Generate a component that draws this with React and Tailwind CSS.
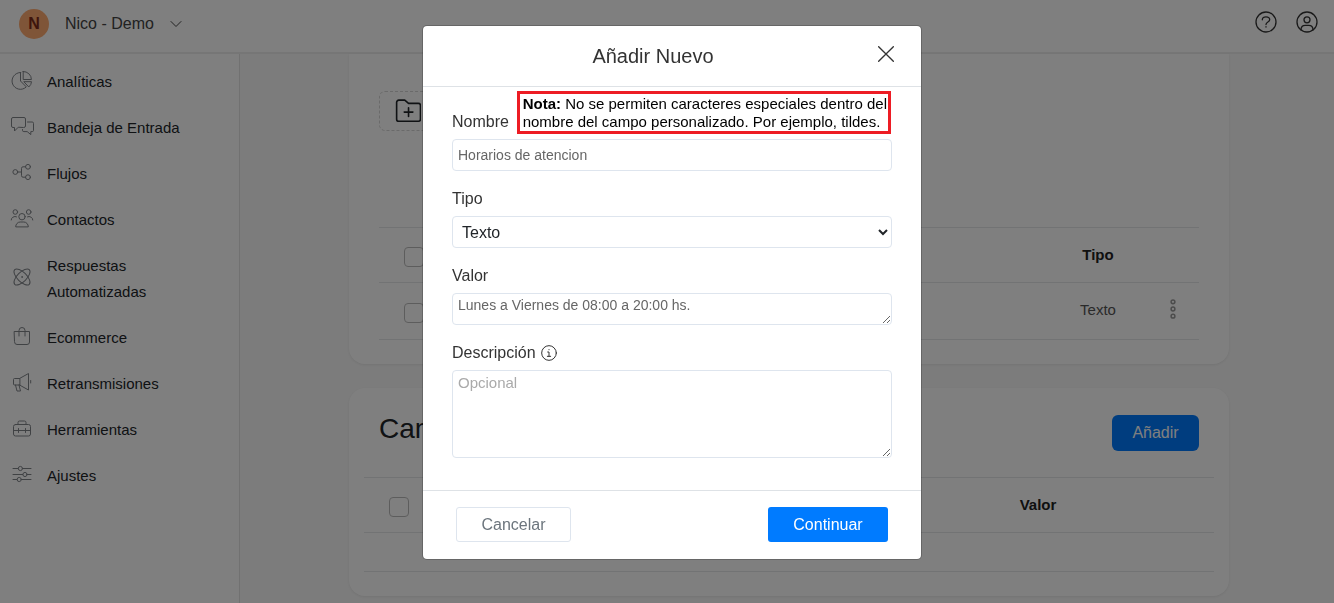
import { useState } from 'react';

const ICONS = {
  analytics: (
    <>
      <path d="M10.5 4.5V13l5.8 5.9A8.4 8.4 0 1 1 10.5 4.5Z" />
      <path d="M13.2 3.5v8h8.2a8 8 0 0 0-8.2-8Z" />
      <path d="M14.2 13.7h7.3a7 7 0 0 1-2.4 5Z" />
    </>
  ),
  inbox: (
    <>
      <path d="M8 13.5 4.5 17v-3.5H3A1.5 1.5 0 0 1 1.5 12V5A1.5 1.5 0 0 1 3 3.5h11A1.5 1.5 0 0 1 15.5 5v7a1.5 1.5 0 0 1-1.5 1.5Z" />
      <path d="M17.5 8h4.7a1.3 1.3 0 0 1 1.3 1.3v7a1.3 1.3 0 0 1-1.3 1.3h-1.4v3l-3.6-3h-3.4a1.3 1.3 0 0 1-1.3-1.3v-.8" />
    </>
  ),
  flows: (
    <>
      <circle cx="5.3" cy="12" r="2.4" />
      <circle cx="18" cy="6.8" r="2.4" />
      <circle cx="18" cy="17.2" r="2.4" />
      <path d="M7.7 12h3.8M15.6 6.8H13q-1.5 0-1.5 1.5v7.4q0 1.5 1.5 1.5h2.6" />
    </>
  ),
  contacts: (
    <>
      <circle cx="12" cy="10.7" r="3.2" />
      <circle cx="5.3" cy="6" r="2.3" />
      <circle cx="18.7" cy="6" r="2.3" />
      <path d="M5.7 20.5a4.5 4.5 0 0 1 4.5-4.5h3.6a4.5 4.5 0 0 1 4.5 4.5Z" />
      <path d="M1.2 14a3.6 3.6 0 0 1 5.3-3.2M22.8 14a3.6 3.6 0 0 0-5.3-3.2" />
    </>
  ),
  automation: (
    <>
      <ellipse cx="12" cy="12" rx="10.3" ry="4.7" transform="rotate(45 12 12)" />
      <ellipse cx="12" cy="12" rx="10.3" ry="4.7" transform="rotate(-45 12 12)" />
      <circle cx="12" cy="12" r="0.4" />
    </>
  ),
  shop: (
    <>
      <path d="M4.5 7.5h15V18a2.5 2.5 0 0 1-2.5 2.5H7A2.5 2.5 0 0 1 4.5 18Z" />
      <path d="M9 12V6.5a3 3 0 0 1 6 0V12" />
    </>
  ),
  broadcast: (
    <>
      <path d="M9.5 8.5h-5a1 1 0 0 0-1 1V14a1 1 0 0 0 1 1h5Z" />
      <path d="m9.5 8.5 9-5V20l-9-5M5.500 15 7 21h3.500L9 15M20.700 10.500V13" />
    </>
  ),
  tools: (
    <>
      <rect x="3.5" y="8.5" width="17" height="11.5" rx="2" />
      <path d="M8 8.5v-2A1.5 1.5 0 0 1 9.500 5h5A1.5 1.5 0 0 1 16 6.500v2M3.500 14.500h17M8.500 12.500v4M15.500 12.500v4" />
    </>
  ),
  settings: (
    <>
      <path d="M3 6.5h5.200M12.600 6.500H21M3 12.500h9.800M17.200 12.500H21M3 17.500h4M11.400 17.500H21" />
      <circle cx="10.4" cy="6.5" r="2.1" />
      <circle cx="15" cy="12.5" r="2.1" />
      <circle cx="9.2" cy="17.5" r="2.1" />
    </>
  ),
};

const MENU = [
  { icon: 'analytics', label: 'Analíticas' },
  { icon: 'inbox', label: 'Bandeja de Entrada' },
  { icon: 'flows', label: 'Flujos' },
  { icon: 'contacts', label: 'Contactos' },
  { icon: 'automation', label: 'Respuestas Automatizadas' },
  { icon: 'shop', label: 'Ecommerce' },
  { icon: 'broadcast', label: 'Retransmisiones' },
  { icon: 'tools', label: 'Herramientas' },
  { icon: 'settings', label: 'Ajustes' },
];

function Icon({ children, className, strokeWidth = 1 }) {
  return (
    <svg
      viewBox="0 0 24 24"
      fill="none"
      stroke="currentColor"
      strokeWidth={strokeWidth}
      strokeLinecap="round"
      strokeLinejoin="round"
      aria-hidden="true"
      className={className}
    >
      {children}
    </svg>
  );
}

function TopBar() {
  return (
    <header className="flex h-[54px] items-center justify-between border-b-2 border-[#ececec] bg-white pb-1 pl-[19px] pr-[15px]">
      <button type="button" className="flex items-center text-base text-[#444]">
        <span className="flex size-[30px] items-center justify-center rounded-full bg-[#ffaa70] font-bold text-[#7d2a18]">N</span>
        <span className="ml-4">Nico - Demo</span>
        <Icon className="ml-4 size-3 text-[#444]" strokeWidth={2}>
          <path d="m2 7 10 10L22 7" />
        </Icon>
      </button>
      <div className="flex items-center gap-[17px] pb-1 text-[#333]">
        <button type="button" aria-label="Ayuda">
          <Icon className="size-6" strokeWidth={1.3}>
            <circle cx="12" cy="12" r="10" />
            <path d="M8.3 9.800c0-1.900 1.600-3 3.700-3s3.700 1.100 3.700 3c0 2.400-3.700 2.100-3.700 4.700M12 16.700v.4" />
          </Icon>
        </button>
        <button type="button" aria-label="Mi cuenta">
          <Icon className="size-6" strokeWidth={1.3}>
            <circle cx="12" cy="12" r="10" />
            <circle cx="12" cy="9.8" r="3" />
            <path d="M6 20c0-3 1.800-4.700 4.200-4.700h3.600c2.400 0 4.200 1.700 4.200 4.700" />
          </Icon>
        </button>
      </div>
    </header>
  );
}

function Sidebar() {
  return (
    <nav className="w-60 shrink-0 border-r border-[#e2e2e2] bg-white pt-[5px]">
      <ul>
        {MENU.map((item) => (
          <li key={item.label}>
            <a href="#" className="flex items-center gap-[13px] py-[10px] pl-[10px] pr-8 text-[15px] leading-[26px] text-[#212529]">
              <Icon className="-mt-1 size-6 shrink-0 text-[#808489]">{ICONS[item.icon]}</Icon>
              <span>{item.label}</span>
            </a>
          </li>
        ))}
      </ul>
    </nav>
  );
}

function Check({ label }) {
  return (
    <input
      type="checkbox"
      aria-label={label}
      className="ml-[25px] mt-1 block size-5 appearance-none rounded border border-[#bbb] bg-white"
    />
  );
}

function FieldsCard() {
  return (
    <section className="rounded-b-2xl bg-white px-[30px] pb-6 pt-[37px] shadow-[0_1px_3px_rgba(0,0,0,0.08)]">
      <button type="button" aria-label="Nueva carpeta" className="flex h-10 w-56 items-center rounded-md border border-dashed border-[#d4d4d4] pl-[15px]">
        <Icon className="size-[26px] text-[#212529]" strokeWidth={1.5}>
          <path d="M1.5 4a2 2 0 0 1 2-2H9l3.500 3h9a2 2 0 0 1 2 2v12.500a2 2 0 0 1-2 2h-18a2 2 0 0 1-2-2ZM12.500 9v8M8.500 13h8" />
        </Icon>
      </button>
      <table className="mt-24 w-full table-fixed border-collapse text-[15px]">
        <thead>
          <tr className="h-[55px] border-y border-[#e4e6e8]">
            <th className="w-20"><Check label="Seleccionar todo" /></th>
            <th />
            <th className="w-[98px] font-bold text-[#212121]">Tipo</th>
            <th className="w-[52px]" />
          </tr>
        </thead>
        <tbody>
          <tr className="h-[57px] border-b border-[#e4e6e8]">
            <td><Check label="Seleccionar campo" /></td>
            <td />
            <td className="pb-[2px] text-center text-[#555]">Texto</td>
            <td className="pb-1">
              <button type="button" aria-label="Opciones" className="mx-auto block">
                <Icon className="size-6 text-[#999]" strokeWidth={1.5}>
                  <circle cx="12" cy="4.8" r="1.9" />
                  <circle cx="12" cy="12" r="1.9" />
                  <circle cx="12" cy="19.2" r="1.9" />
                </Icon>
              </button>
            </td>
          </tr>
        </tbody>
      </table>
    </section>
  );
}

function GlobalFieldsCard() {
  return (
    <section className="mt-6 rounded-2xl bg-white px-[15px] pb-6 pt-[27px] shadow-[0_1px_3px_rgba(0,0,0,0.08)]">
      <div className="flex h-9 items-center justify-between px-[15px]">
        <h2 className="pb-2 text-[28px] leading-8 text-[#212529]">Campos</h2>
        <button type="button" className="h-9 w-[87px] rounded-md bg-[#007bff] text-base text-white">Añadir</button>
      </div>
      <table className="mt-[26px] w-full table-fixed border-collapse text-[15px]">
        <thead>
          <tr className="h-[55px] border-y border-[#e4e6e8]">
            <th className="w-20"><Check label="Seleccionar todo" /></th>
            <th />
            <th className="w-[150px] font-bold text-[#212121]">Valor</th>
            <th className="w-[101px]" />
          </tr>
        </thead>
        <tbody>
          <tr className="h-[39px] border-b border-[#e4e6e8]">
            <td colSpan={4} />
          </tr>
        </tbody>
      </table>
    </section>
  );
}

function NewFieldModal() {
  const [name, setName] = useState('Horarios de atencion');
  const [value, setValue] = useState('Lunes a Viernes de 08:00 a 20:00 hs.');

  return (
    <div className="fixed inset-0 z-10 flex items-start justify-center overflow-auto bg-black/50 pl-[10px] pt-[25px]">
      <form
        role="dialog"
        aria-labelledby="modal-title"
        onSubmit={(e) => e.preventDefault()}
        className="w-full max-w-[500px] rounded-[5px] border border-black/20 bg-white bg-clip-padding text-[#333]"
      >
        <div className="flex h-[61px] items-center border-b border-[#dee2e6] pl-3 pr-5">
          <h5 id="modal-title" className="flex-1 text-center text-xl">Añadir Nuevo</h5>
          <button type="button" aria-label="Cerrar" className="flex w-[30px] justify-center pb-1">
            <Icon className="size-4" strokeWidth={2}>
              <path d="m1 1 22 22M23 1 1 23" />
            </Icon>
          </button>
        </div>

        <div className="px-[29px] pb-8 pt-1">
          <div className="flex items-end justify-between pb-[5px] pr-px">
            <label htmlFor="name">Nombre</label>
            <p className="border-[3px] border-[#ed1c24] pl-[3px] pr-px pt-px text-[15px] leading-[18px] text-black">
              <b>Nota:</b> No se permiten caracteres especiales dentro del<br />
              nombre del campo personalizado. Por ejemplo, tildes.
            </p>
          </div>
          <input
            id="name"
            type="text"
            value={name}
            onChange={(e) => setName(e.target.value)}
            className="block h-8 w-full rounded border border-[#dee5ee] px-[5px] text-sm text-[#666]"
          />

          <label htmlFor="type" className="mb-[5px] mt-4 block">Tipo</label>
          <select id="type" className="block h-8 w-full rounded border border-[#dee5ee] bg-white px-[5px] text-base text-[#212529]">
            <option>Texto</option>
          </select>

          <label htmlFor="value" className="mb-[5px] mt-4 block">Valor</label>
          <textarea
            id="value"
            value={value}
            onChange={(e) => setValue(e.target.value)}
            className="block h-8 w-full overflow-hidden rounded border border-[#dee5ee] px-[5px] text-sm leading-[22px] text-[#666]"
          />

          <div className="mb-[5px] mt-4 flex items-center gap-[5px]">
            <label htmlFor="description">Descripción</label>
            <Icon className="size-4" strokeWidth={1.5}>
              <circle cx="12" cy="12" r="11" />
              <path d="M10 10.500h2V17M9.500 17h5M12 6.800v.4" />
            </Icon>
          </div>
          <textarea
            id="description"
            placeholder="Opcional"
            className="block h-[88px] w-full rounded border border-[#dee5ee] px-[5px] text-[15px] leading-6 placeholder:text-[#aaa]"
          />
        </div>

        <div className="flex justify-between border-t border-[#dee2e6] px-[33px] pb-[17px] pt-4">
          <button type="button" className="h-[35px] w-[115px] rounded-[3px] border border-[#dee5ee] text-[#6c757d]">Cancelar</button>
          <button type="submit" className="h-[35px] w-[120px] rounded-[3px] bg-[#007bff] text-white">Continuar</button>
        </div>
      </form>
    </div>
  );
}

export default function App() {
  return (
    <div className="flex min-h-screen flex-col bg-[#f9f9f9] font-['Liberation_Sans',Arial,sans-serif]">
      <TopBar />
      <div className="flex flex-1">
        <Sidebar />
        <main className="flex-1 pb-[6px] pl-[109px] pr-[105px]">
          <FieldsCard />
          <GlobalFieldsCard />
        </main>
      </div>
      <NewFieldModal />
    </div>
  );
}
